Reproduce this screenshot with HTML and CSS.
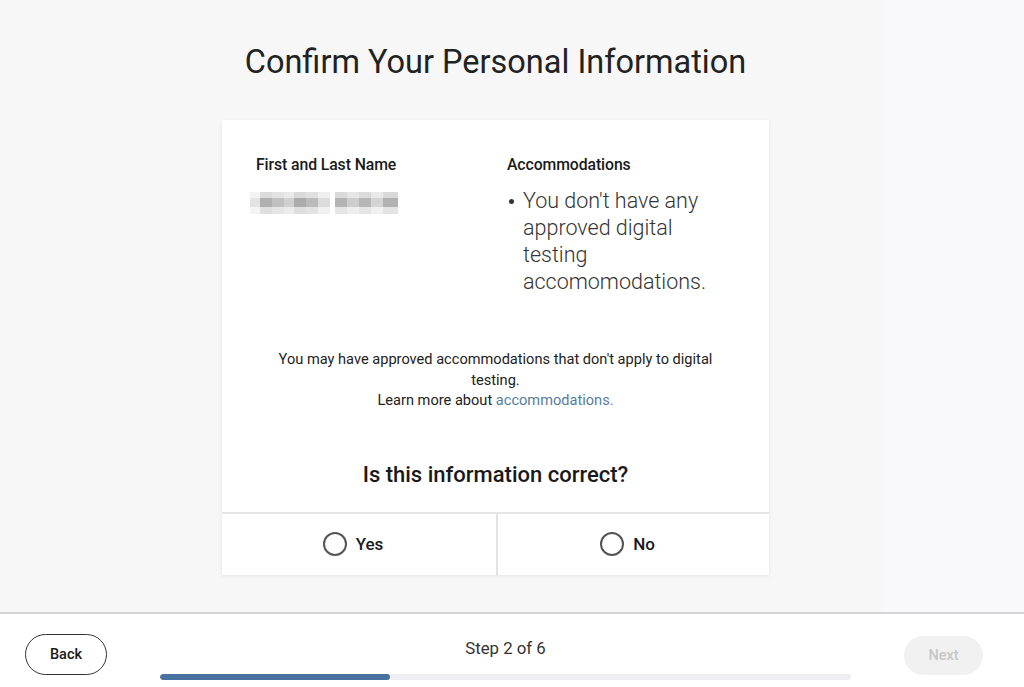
FILE: index.html
```html
<!DOCTYPE html>
<html lang="en">
<head>
<meta charset="utf-8">
<title>Confirm Your Personal Information</title>
<link rel="stylesheet" href="styles.css">
</head>
<body>
<div class="page">
  <main class="main">
    <h1 class="title">Confirm Your Personal Information</h1>
    <section class="card">
      <div class="info">
        <div class="col">
          <div class="label">First and Last Name</div>
          <div class="name" aria-label="Name hidden">
            <span class="word w1"></span>
            <span class="word w2"></span>
          </div>
        </div>
        <div class="col">
          <div class="label">Accommodations</div>
          <ul class="acc-list">
            <li>You don't have any approved digital testing accomomodations.</li>
          </ul>
        </div>
      </div>
      <p class="note">You may have approved accommodations that don't apply to digital testing.<br>Learn more about <a href="#" class="link">accommodations.</a></p>
      <h2 class="question">Is this information correct?</h2>
      <div class="choices">
        <label class="choice"><span class="radio"></span><span>Yes</span></label>
        <label class="choice"><span class="radio"></span><span>No</span></label>
      </div>
    </section>
  </main>
  <footer class="footer">
    <button class="btn back">Back</button>
    <div class="progress-block">
      <div class="step">Step 2 of 6</div>
      <div class="track"><div class="fill" style="width:230px"></div></div>
    </div>
    <button class="btn next" disabled>Next</button>
  </footer>
</div>
</body>
</html>
```

FILE: styles.css
```css
* { box-sizing: border-box; }
html, body { margin: 0; padding: 0; }
body {
  font-family: Roboto, "Liberation Sans", Arial, sans-serif;
  color: #222;
  width: 1024px;
  height: 687px;
  overflow: hidden;
  background: #f7f7f8;
}
.page {
  display: flex;
  flex-direction: column;
  height: 687px;
}
.main {
  flex: 1;
  display: flex;
  flex-direction: column;
  align-items: center;
  padding-right: 33px;
  background: linear-gradient(to right, #f7f7f8 0 883px, #f9f9fb 883px);
}
.title {
  margin: 42px 0 0;
  font-size: 32.5px;
  line-height: 40px;
  font-weight: 400;
  color: #222;
}
.card {
  margin-top: 38px;
  width: 547px;
  background: #fff;
  box-shadow: 0 1px 4px rgba(0,0,0,0.07);
}
.info {
  display: grid;
  grid-template-columns: 251px 1fr;
  padding: 35px 34px 0;
}
.label {
  font-size: 15.8px;
  line-height: 20px;
  font-weight: 500;
  color: #1a1a1a;
  letter-spacing: -0.1px;
}
.name {
  display: flex;
  gap: 5px;
  margin-top: 17px;
  margin-left: -6px;
  height: 22px;
}
.word {
  display: block;
  height: 22px;
  filter: blur(0.5px);
}
.w1 {
  width: 80px;
  background:
    linear-gradient(to bottom, rgba(255,255,255,0.55) 0 6px, rgba(255,255,255,0) 6px 15px, rgba(255,255,255,0.6) 15px),
    linear-gradient(to right, #e4e4e4 0 10px, #b0b0b0 10px 22px, #c0c0c0 22px 34px, #d0d0d0 34px 44px, #acacac 44px 56px, #bababa 56px 68px, #dcdcdc 68px 80px);
}
.w2 {
  width: 63px;
  background:
    linear-gradient(to bottom, rgba(255,255,255,0.5) 0 6px, rgba(255,255,255,0) 6px 15px, rgba(255,255,255,0.65) 15px),
    linear-gradient(to right, #b4b4b4 0 12px, #cdcdcd 12px 24px, #b6b6b6 24px 36px, #d4d4d4 36px 48px, #b2b2b2 48px 63px);
}
.acc-list {
  list-style: none;
  margin: 12px 0 0;
  padding: 0 0 0 16px;
}
.acc-list li {
  position: relative;
  width: 200px;
  font-size: 21.5px;
  line-height: 27px;
  font-weight: 300;
  color: #333;
}
.acc-list li::before {
  content: "";
  position: absolute;
  left: -14px;
  top: 12px;
  width: 5px;
  height: 5px;
  border-radius: 50%;
  background: #333;
}
.note {
  margin: 54px 0 0;
  padding: 0 48px;
  text-align: center;
  font-size: 14.6px;
  line-height: 20.5px;
  color: #222;
}
.link {
  color: #567d9e;
  text-decoration: none;
}
.question {
  margin: 50px 0 0;
  text-align: center;
  font-size: 22px;
  line-height: 28px;
  font-weight: 500;
  color: #1a1a1a;
}
.choices {
  margin-top: 23px;
  display: grid;
  grid-template-columns: 274px 1fr;
  border-top: 2px solid #e6e6e6;
  height: 63px;
}
.choice {
  display: flex;
  align-items: center;
  justify-content: center;
  gap: 9px;
  padding-right: 12px;
  font-size: 17px;
  font-weight: 500;
  color: #1a1a1a;
  cursor: pointer;
}
.choice + .choice {
  border-left: 2px solid #e2e2e2;
}
.radio {
  width: 24px;
  height: 24px;
  border: 2px solid #555;
  border-radius: 50%;
}
.footer {
  height: 75px;
  border-top: 2px solid #d4d4d6;
  background: #fff;
  display: flex;
  align-items: flex-start;
  padding: 0 41px 0 25px;
}
.btn {
  font-family: Roboto, "Liberation Sans", Arial, sans-serif;
  font-size: 14.5px;
  font-weight: 500;
  border-radius: 21px;
}
.back {
  margin-top: 20px;
  width: 82px;
  height: 41px;
  background: #fff;
  border: 1px solid #333;
  color: #1a1a1a;
}
.next {
  margin-top: 22px;
  width: 79px;
  height: 39px;
  background: #f1f1f2;
  border: none;
  color: #c6c6c6;
}
.progress-block {
  flex: 1;
  padding: 24px 53px 0;
  display: flex;
  flex-direction: column;
  align-items: center;
}
.step {
  font-size: 16.8px;
  line-height: 20px;
  color: #333;
}
.track {
  margin-top: 16px;
  width: 100%;
  height: 6px;
  border-radius: 3px;
  background: #eeeef3;
  overflow: hidden;
}
.fill {
  height: 6px;
  border-radius: 3px;
  background: #4a72a0;
}
```
